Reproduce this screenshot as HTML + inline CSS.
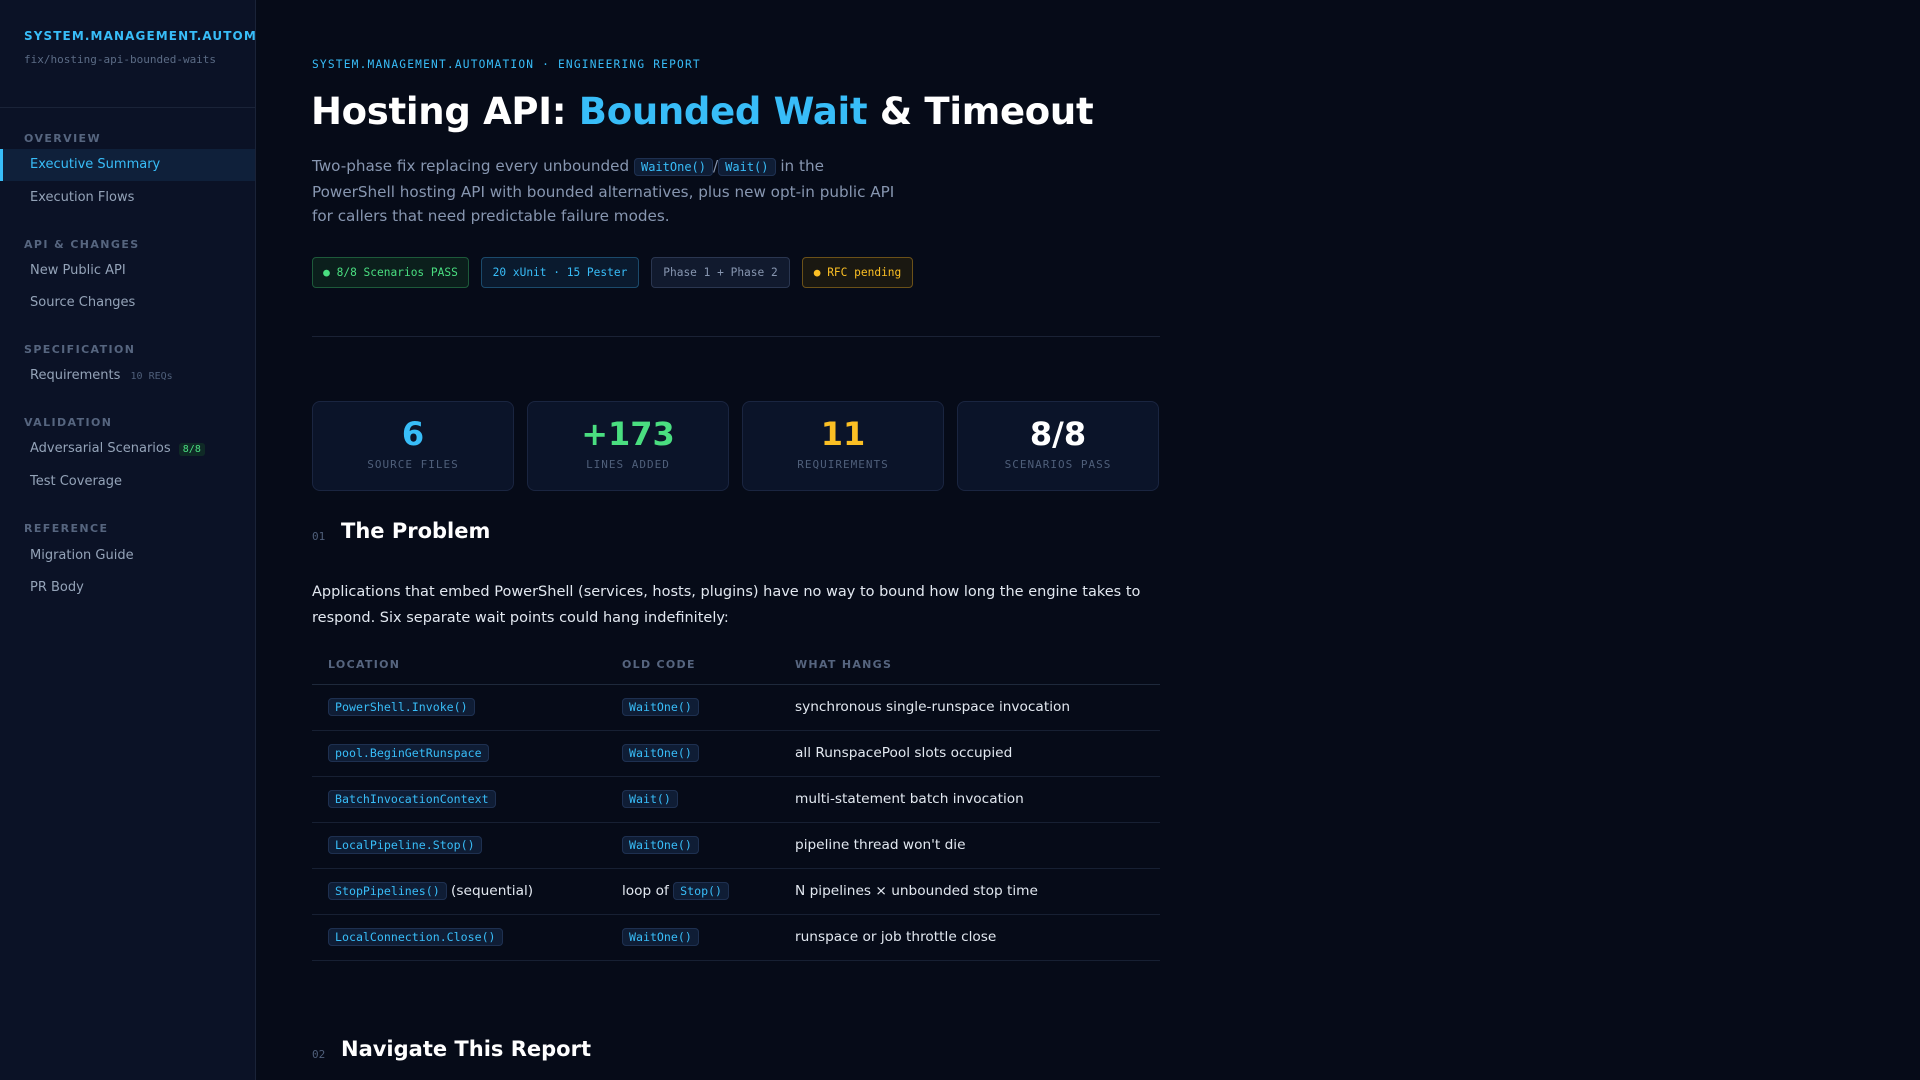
<!DOCTYPE html>
<html><head><meta charset="utf-8"><style>
*{margin:0;padding:0;box-sizing:border-box}
body{width:1920px;height:1080px;overflow:hidden;background:#060b18;font-family:"DejaVu Sans","Liberation Sans",sans-serif;color:#e2e8f0;position:relative}
.mono{font-family:"DejaVu Sans Mono","Liberation Mono",monospace}
.sb{position:absolute;left:0;top:0;width:256px;height:1080px;background:#0b1226;border-right:1px solid #1a2338;overflow:hidden}
.a{position:absolute;white-space:nowrap}
.brand{left:24px;top:29px;font-size:12px;font-weight:bold;color:#38bdf8;letter-spacing:1.1px}
.branch{left:24px;top:53px;font-size:11px;color:#5b6b85}
.sdiv{position:absolute;left:0;top:107px;width:256px;height:1px;background:#1a2338}
.sec{left:24px;font-size:11px;font-weight:bold;color:#56657f;letter-spacing:1.4px}
.it{left:30px;font-size:13px;color:#94a3b8}
.act{position:absolute;left:0;top:149px;width:256px;height:32px;background:#0f203a;border-left:3px solid #38bdf8}
.code{font-family:"DejaVu Sans Mono",monospace;font-size:11.6px;color:#38bdf8;background:#0f1d35;border:1px solid #1e3050;border-radius:4px;padding:1px 6px}
.badge{position:absolute;top:257px;height:31px;border-radius:4px;font-family:"DejaVu Sans Mono",monospace;font-size:11.2px;line-height:29px;text-align:center}
.card{position:absolute;top:401px;width:202px;height:90px;background:#0b1429;border:1px solid #1a2540;border-radius:8px;text-align:center}
.card .n{font-size:32px;font-weight:bold;margin-top:13px;line-height:38px}
.card .l{font-family:"DejaVu Sans Mono",monospace;font-size:11px;color:#4f5f7a;letter-spacing:1px;margin-top:5px}
table{position:absolute;left:312px;top:645px;width:848px;border-collapse:collapse}
th{text-align:left;font-size:11px;color:#56657f;letter-spacing:1.3px;font-weight:bold;height:39px;padding-left:16px;border-bottom:1px solid #1e293b}
td{height:46px;padding-left:16px;font-size:13.7px;color:#e2e8f0;border-bottom:1px solid #172033}
</style></head><body>
<div class="sb">
<div class="a brand">SYSTEM.MANAGEMENT.AUTOMATION</div>
<div class="a branch mono">fix/hosting-api-bounded-waits</div>
<div class="sdiv"></div>
<div class="a sec" style="top:132px">OVERVIEW</div>
<div class="act"></div>
<div class="a it" style="top:157px;color:#38bdf8">Executive Summary</div>
<div class="a it" style="top:190px">Execution Flows</div>
<div class="a sec" style="top:238px">API &amp; CHANGES</div>
<div class="a it" style="top:263px">New Public API</div>
<div class="a it" style="top:295px">Source Changes</div>
<div class="a sec" style="top:343px">SPECIFICATION</div>
<div class="a it" style="top:368px">Requirements <span class="mono" style="font-size:10px;color:#4f5f7a;margin-left:6px">10 REQs</span></div>
<div class="a sec" style="top:416px">VALIDATION</div>
<div class="a it" style="top:441px">Adversarial Scenarios <span class="mono" style="font-size:10px;color:#4ade80;background:#0f2a26;border-radius:3px;padding:1px 4px;margin-left:4px">8/8</span></div>
<div class="a it" style="top:474px">Test Coverage</div>
<div class="a sec" style="top:522px">REFERENCE</div>
<div class="a it" style="top:548px">Migration Guide</div>
<div class="a it" style="top:580px">PR Body</div>
</div>

<div class="a mono" style="left:312px;top:58px;font-size:11.2px;color:#38bdf8;letter-spacing:1.2px">SYSTEM.MANAGEMENT.AUTOMATION · ENGINEERING REPORT</div>
<div class="a" style="left:311px;top:90px;font-size:37px;font-weight:bold;color:#fff;letter-spacing:-0.3px">Hosting API: <span style="color:#38bdf8">Bounded Wait</span> &amp; Timeout</div>
<div class="a" style="left:312px;top:154px;width:590px;white-space:normal;font-size:15.2px;line-height:24.5px;color:#8796b0">Two-phase fix replacing every unbounded <span class="code" style="font-size:12px">WaitOne()</span>/<span class="code" style="font-size:12px">Wait()</span> in the PowerShell hosting API with bounded alternatives, plus new opt-in public API for callers that need predictable failure modes.</div>

<div class="badge" style="left:312px;width:157px;background:#0b1f1c;border:1px solid #1d5a3a;color:#4ade80">● 8/8 Scenarios PASS</div>
<div class="badge" style="left:481px;width:158px;background:#0a1a2e;border:1px solid #1b4a6b;color:#38bdf8">20 xUnit · 15 Pester</div>
<div class="badge" style="left:651px;width:139px;background:#111a2e;border:1px solid #2a3650;color:#8796b0">Phase 1 + Phase 2</div>
<div class="badge" style="left:802px;width:111px;background:#1a1811;border:1px solid #6b5118;color:#fbbf24">● RFC pending</div>

<div class="a" style="left:312px;top:336px;width:848px;height:1px;background:#1a2235"></div>

<div class="card" style="left:312px"><div class="n" style="color:#38bdf8">6</div><div class="l">SOURCE FILES</div></div>
<div class="card" style="left:527px"><div class="n" style="color:#4ade80">+173</div><div class="l">LINES ADDED</div></div>
<div class="card" style="left:742px"><div class="n" style="color:#fbbf24">11</div><div class="l">REQUIREMENTS</div></div>
<div class="card" style="left:957px"><div class="n" style="color:#fff">8/8</div><div class="l">SCENARIOS PASS</div></div>

<div class="a mono" style="left:312px;top:530px;font-size:11px;color:#4f5f7a">01</div>
<div class="a" style="left:341px;top:519px;font-size:21px;font-weight:bold;color:#fff">The Problem</div>
<div class="a" style="left:312px;top:579px;width:848px;white-space:normal;font-size:14.5px;line-height:26px;color:#e2e8f0">Applications that embed PowerShell (services, hosts, plugins) have no way to bound how long the engine takes to respond. Six separate wait points could hang indefinitely:</div>

<table>
<tr><th style="width:294px">LOCATION</th><th style="width:173px">OLD CODE</th><th>WHAT HANGS</th></tr>
<tr><td><span class="code">PowerShell.Invoke()</span></td><td><span class="code">WaitOne()</span></td><td>synchronous single-runspace invocation</td></tr>
<tr><td><span class="code">pool.BeginGetRunspace</span></td><td><span class="code">WaitOne()</span></td><td>all RunspacePool slots occupied</td></tr>
<tr><td><span class="code">BatchInvocationContext</span></td><td><span class="code">Wait()</span></td><td>multi-statement batch invocation</td></tr>
<tr><td><span class="code">LocalPipeline.Stop()</span></td><td><span class="code">WaitOne()</span></td><td>pipeline thread won't die</td></tr>
<tr><td><span class="code">StopPipelines()</span> (sequential)</td><td>loop of <span class="code">Stop()</span></td><td>N pipelines × unbounded stop time</td></tr>
<tr><td><span class="code">LocalConnection.Close()</span></td><td><span class="code">WaitOne()</span></td><td>runspace or job throttle close</td></tr>
</table>

<div class="a mono" style="left:312px;top:1048px;font-size:11px;color:#4f5f7a">02</div>
<div class="a" style="left:341px;top:1037px;font-size:21px;font-weight:bold;color:#fff">Navigate This Report</div>
</body></html>
